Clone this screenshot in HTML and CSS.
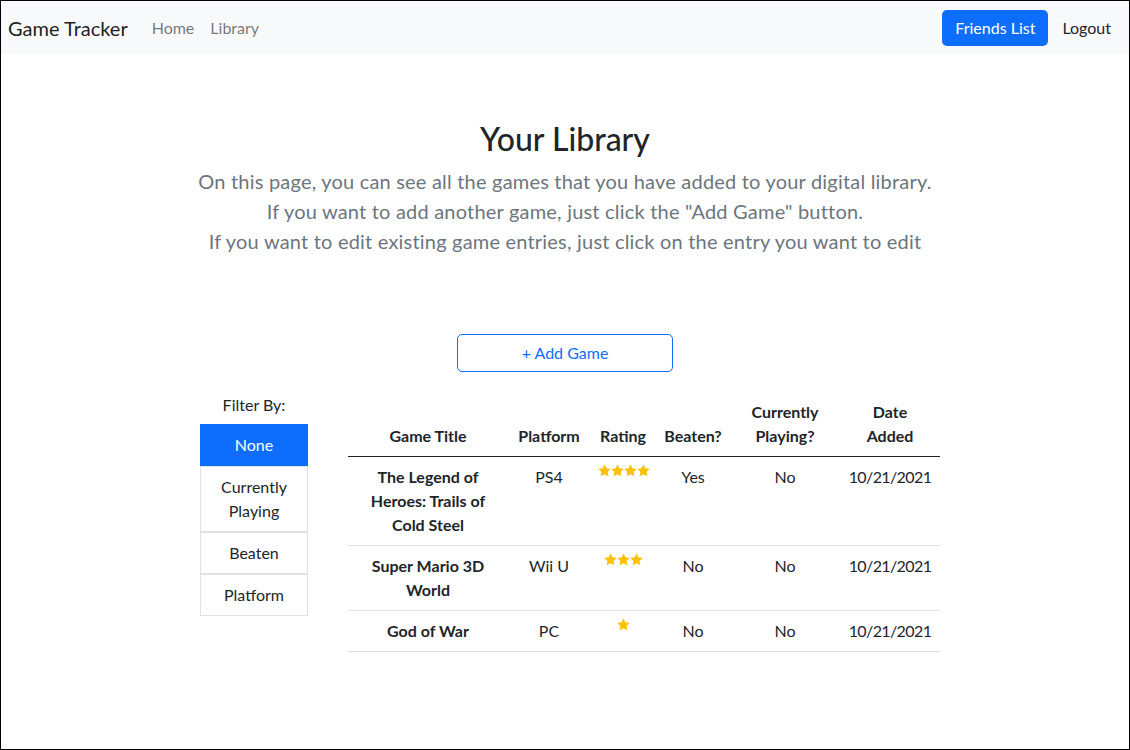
FILE: index.html
```html
<!DOCTYPE html>
<html lang="en">
<head>
<meta charset="utf-8">
<title>Game Tracker</title>
<link rel="stylesheet" href="styles.css">
</head>
<body>
<div class="frame">
  <nav class="navbar">
    <a class="brand" href="#">Game Tracker</a>
    <ul class="nav-links">
      <li><a class="nav-link" href="#">Home</a></li>
      <li><a class="nav-link" href="#">Library</a></li>
    </ul>
    <div class="nav-right">
      <a class="btn-primary" href="#">Friends List</a>
      <a class="nav-link nav-link-dark" href="#">Logout</a>
    </div>
  </nav>

  <main class="main">
    <section class="intro">
      <h2 class="title">Your Library</h2>
      <p class="lead">On this page, you can see all the games that you have added to your digital library.<br>If you want to add another game, just click the "Add Game" button.<br>If you want to edit existing game entries, just click on the entry you want to edit</p>
    </section>

    <div class="add-wrap">
      <button class="btn-outline" type="button">+ Add Game</button>
    </div>

    <div class="library">
      <aside class="filter">
        <div class="filter-label">Filter By:</div>
        <div class="filter-list">
          <button class="filter-item active" type="button">None</button>
          <button class="filter-item" type="button">Currently Playing</button>
          <button class="filter-item" type="button">Beaten</button>
          <button class="filter-item" type="button">Platform</button>
        </div>
      </aside>

      <table class="games">
        <colgroup>
          <col class="c-title"><col class="c-platform"><col class="c-rating"><col class="c-beaten"><col class="c-playing"><col class="c-date">
        </colgroup>
        <thead>
          <tr>
            <th>Game Title</th>
            <th>Platform</th>
            <th>Rating</th>
            <th>Beaten?</th>
            <th>Currently Playing?</th>
            <th>Date Added</th>
          </tr>
        </thead>
        <tbody>
          <tr>
            <td class="game-title">The Legend of Heroes: Trails of Cold Steel</td>
            <td>PS4</td>
            <td><span class="stars"><svg viewBox="1 1.2 22 21"><path d="M12 1.5l3.2 6.6 7.3 1-5.3 5.1 1.3 7.2L12 18l-6.5 3.4 1.3-7.2L1.5 9.1l7.3-1z"/></svg><svg viewBox="1 1.2 22 21"><path d="M12 1.5l3.2 6.6 7.3 1-5.3 5.1 1.3 7.2L12 18l-6.5 3.4 1.3-7.2L1.5 9.1l7.3-1z"/></svg><svg viewBox="1 1.2 22 21"><path d="M12 1.5l3.2 6.6 7.3 1-5.3 5.1 1.3 7.2L12 18l-6.5 3.4 1.3-7.2L1.5 9.1l7.3-1z"/></svg><svg viewBox="1 1.2 22 21"><path d="M12 1.5l3.2 6.6 7.3 1-5.3 5.1 1.3 7.2L12 18l-6.5 3.4 1.3-7.2L1.5 9.1l7.3-1z"/></svg></span></td>
            <td>Yes</td>
            <td>No</td>
            <td class="date">10/21/2021</td>
          </tr>
          <tr>
            <td class="game-title">Super Mario 3D World</td>
            <td>Wii U</td>
            <td><span class="stars"><svg viewBox="1 1.2 22 21"><path d="M12 1.5l3.2 6.6 7.3 1-5.3 5.1 1.3 7.2L12 18l-6.5 3.4 1.3-7.2L1.5 9.1l7.3-1z"/></svg><svg viewBox="1 1.2 22 21"><path d="M12 1.5l3.2 6.6 7.3 1-5.3 5.1 1.3 7.2L12 18l-6.5 3.4 1.3-7.2L1.5 9.1l7.3-1z"/></svg><svg viewBox="1 1.2 22 21"><path d="M12 1.5l3.2 6.6 7.3 1-5.3 5.1 1.3 7.2L12 18l-6.5 3.4 1.3-7.2L1.5 9.1l7.3-1z"/></svg></span></td>
            <td>No</td>
            <td>No</td>
            <td class="date">10/21/2021</td>
          </tr>
          <tr>
            <td class="game-title">God of War</td>
            <td>PC</td>
            <td><span class="stars"><svg viewBox="1 1.2 22 21"><path d="M12 1.5l3.2 6.6 7.3 1-5.3 5.1 1.3 7.2L12 18l-6.5 3.4 1.3-7.2L1.5 9.1l7.3-1z"/></svg></span></td>
            <td>No</td>
            <td>No</td>
            <td class="date">10/21/2021</td>
          </tr>
        </tbody>
      </table>
    </div>
  </main>
</div>
</body>
</html>
```

FILE: styles.css
```css
* { box-sizing: border-box; }

html, body {
  margin: 0;
  padding: 0;
  background: #fff;
}

body {
  font-family: "Lato", "Open Sans", "DejaVu Sans", sans-serif;
  font-size: 16px;
  line-height: 1.5;
  color: #212529;
}

a { text-decoration: none; }

.frame {
  width: 1130px;
  height: 750px;
  border: 1px solid #000;
  overflow: hidden;
}

/* navbar */
.navbar {
  height: 53px;
  background: #f8f9fa;
  display: flex;
  align-items: center;
  padding: 0 10px 0 7px;
}

.brand {
  font-size: 20px;
  line-height: 30px;
  color: rgba(0, 0, 0, 0.9);
  margin-right: 16px;
}

.nav-links {
  display: flex;
  list-style: none;
  margin: 0;
  padding: 0;
}

.nav-link {
  display: block;
  padding: 8px;
  color: rgba(0, 0, 0, 0.55);
  line-height: 24px;
}

.nav-link-dark { color: #212529; }

.nav-right {
  margin-left: auto;
  display: flex;
  align-items: center;
  gap: 6px;
}

.btn-primary {
  display: inline-block;
  background: #0d6efd;
  color: #fff;
  border-radius: 5px;
  padding: 6px 13px;
  line-height: 24px;
}

/* intro */
.intro {
  text-align: center;
  padding-top: 66px;
}

.title {
  margin: 0 0 8px;
  font-size: 32px;
  font-weight: 500;
  line-height: 1.2;
  color: #212529;
}

.lead {
  margin: 0;
  font-size: 20px;
  font-weight: 400;
  letter-spacing: 0.2px;
  line-height: 30px;
  color: #6c757d;
}

.add-wrap {
  display: flex;
  justify-content: center;
  margin-top: 78px;
}

.btn-outline {
  width: 216px;
  height: 38px;
  border: 1px solid #0d6efd;
  border-radius: 5px;
  background: #fff;
  color: #0d6efd;
  font: inherit;
  line-height: 24px;
}

/* library */
.library {
  display: flex;
  align-items: flex-start;
  margin-top: 20px;
  padding-left: 199px;
}

.filter {
  width: 108px;
  margin-right: 40px;
  text-align: center;
}

.filter-label {
  line-height: 24px;
  padding-top: 1px;
  margin-bottom: 7px;
}

.filter-list {
  display: flex;
  flex-direction: column;
}

.filter-item {
  display: block;
  width: 100%;
  border: 1px solid #dee2e6;
  background: #fff;
  color: #212529;
  font: inherit;
  line-height: 24px;
  padding: 8px;
  text-align: center;
}

.filter-item.active {
  background: #0d6efd;
  border-color: #0d6efd;
  color: #fff;
}

.games {
  width: 592px;
  table-layout: fixed;
  border-collapse: collapse;
  text-align: center;
}

.c-title { width: 160px; }
.c-platform { width: 82px; }
.c-rating { width: 66px; }
.c-beaten { width: 74px; }
.c-playing { width: 110px; }
.c-date { width: 100px; }

.games th {
  padding: 8px;
  font-weight: 700;
  vertical-align: bottom;
  line-height: 24px;
  border-bottom: 1px solid #212529;
}

.games td {
  padding: 8px;
  vertical-align: top;
  line-height: 24px;
  border-bottom: 1px solid #dee2e6;
}

.games td.game-title { font-weight: 700; }

.games td.date { letter-spacing: -0.6px; }

.stars {
  display: inline-flex;
  vertical-align: top;
  margin-top: -1px;
}

.stars svg {
  width: 13px;
  height: 13px;
  fill: #ffc107;
}
```
